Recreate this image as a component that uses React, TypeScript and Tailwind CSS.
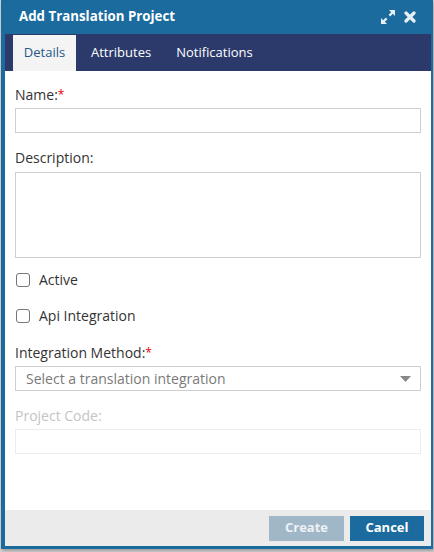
import React from 'react';

const Label = ({ text, required, muted }: { text: string; required?: boolean; muted?: boolean }) => (
  <div className={`text-[14px] leading-[20px] ${muted ? 'text-[#c4c4c4]' : 'text-[#333]'}`}>
    {text}
    {required && <sup className="text-[#e60000] text-[12px] relative top-[-1px]">*</sup>}
  </div>
);

const Check = ({ text }: { text: string }) => (
  <label className="flex items-center gap-[9px] text-[14px] leading-[20px] text-[#333]">
    <span className="w-[14px] h-[14px] border border-[#767676] rounded-[3px] bg-white ml-[1px]" />
    {text}
  </label>
);

export default function App() {
  return (
    <div className="w-[434px] h-[552px] bg-[#d4d4d4] pl-[1px]" style={{ fontFamily: '"Open Sans", "Noto Sans", sans-serif' }}>
      <div className="w-[432px] h-[549px] bg-[#1b6b9e] pl-[4px] pr-[2px] pb-[3px] flex flex-col shadow-[1px_2px_3px_rgba(0,0,0,0.25)]">
        {/* Title bar */}
        <div className="h-[34px] flex items-center justify-between pl-[14px] pr-[15px]">
          <span className="text-white font-bold text-[13.3px]">Add Translation Project</span>
          <div className="flex items-center gap-[9px]">
            <svg width="14" height="14" viewBox="0 0 14 14" fill="#e8f0f6">
              <path d="M8 0h6v6l-2.2-2.2-2.6 2.6-1.6-1.6 2.6-2.6z" />
              <path d="M6 14H0V8l2.2 2.2 2.6-2.6 1.6 1.6-2.6 2.6z" />
            </svg>
            <svg width="12" height="12" viewBox="0 0 12 12">
              <path d="M2 2l8 8M10 2l-8 8" stroke="#e8f0f6" strokeWidth="3.2" strokeLinecap="round" />
            </svg>
          </div>
        </div>

        <div className="flex-1 bg-white flex flex-col">
          {/* Tabs */}
          <div className="h-[37px] bg-[#2b3a6b] flex items-end pl-[8px] text-[13px]">
            <div className="h-[36px] w-[63px] bg-[#f4f4f4] text-[#24578d] flex items-center justify-center">Details</div>
            <div className="h-[36px] pl-[15px] pr-[25px] text-white flex items-center">Attributes</div>
            <div className="h-[36px] text-white flex items-center">Notifications</div>
          </div>

          {/* Body */}
          <div className="flex-1 px-[10px] pt-[14px] flex flex-col">
            <Label text="Name:" required />
            <div className="mt-[3px] h-[25px] border border-[#cfcfcf]" />

            <div className="mt-[15px]">
              <Label text="Description:" />
            </div>
            <div className="mt-[4px] h-[86px] border border-[#cfcfcf]" />

            <div className="mt-[12px]">
              <Check text="Active" />
            </div>
            <div className="mt-[16px]">
              <Check text="Api Integration" />
            </div>

            <div className="mt-[17px]">
              <Label text="Integration Method:" required />
            </div>
            <div className="mt-[3px] h-[25px] border border-[#cfcfcf] flex items-center justify-between pl-[10px] pr-[9px]">
              <span className="text-[14px] text-[#7a7a7a]">Select a translation integration</span>
              <svg width="11" height="6" viewBox="0 0 11 6">
                <path d="M0 0h11L5.5 6z" fill="#888" />
              </svg>
            </div>

            <div className="mt-[15px]">
              <Label text="Project Code:" muted />
            </div>
            <div className="mt-[3px] h-[25px] border border-[#ededed]" />
          </div>

          {/* Footer */}
          <div className="h-[36px] bg-[#ebebeb] flex items-center justify-end gap-[6px] pr-[7px]">
            <button className="w-[75px] h-[25px] bg-[#a0b7c7] text-[#eef2f5] text-[13px] font-bold">Create</button>
            <button className="w-[74px] h-[25px] bg-[#1b6b9e] text-white text-[13px] font-bold">Cancel</button>
          </div>
        </div>
      </div>
    </div>
  );
}
